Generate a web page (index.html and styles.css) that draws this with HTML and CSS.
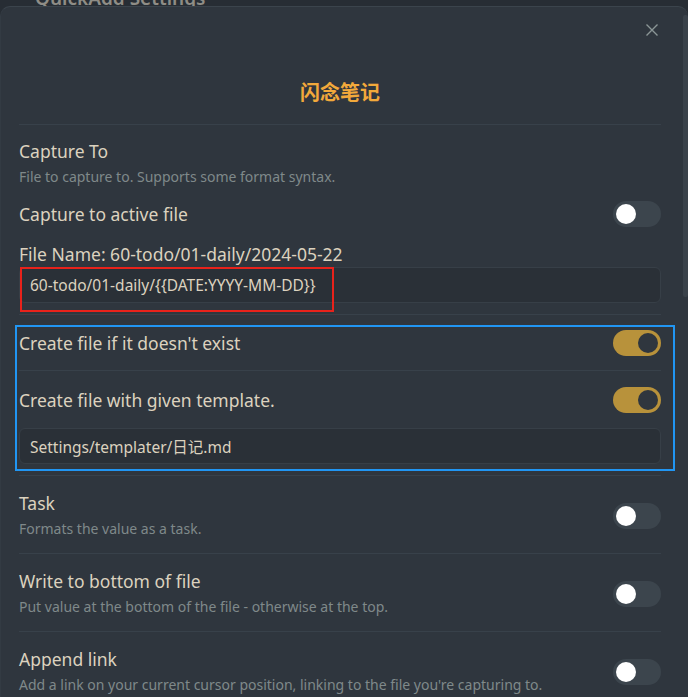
FILE: index.html
```html
<!DOCTYPE html>
<html>
<head>
<meta charset="utf-8">
<link rel="stylesheet" href="styles.css">
</head>
<body>
<div class="page-title">QuickAdd Settings</div>
<div class="modal">
  <div class="scroll-thumb"></div>
  <div class="close-row">
    <svg class="close" width="14" height="14" viewBox="0 0 14 14"><path d="M1.5 1.5L12.5 12.5M12.5 1.5L1.5 12.5" stroke="#8b9696" stroke-width="1.4" fill="none"/></svg>
  </div>
  <h2 class="title">闪念笔记</h2>
  <div class="content">
    <div class="block first">
      <div class="name">Capture To</div>
      <div class="desc">File to capture to. Supports some format syntax.</div>
      <div class="row">
        <div class="name">Capture to active file</div>
        <div class="toggle"></div>
      </div>
      <div class="name fname">File Name: 60-todo/01-daily/2024-05-22</div>
      <div class="input">60-todo/01-daily/{{DATE:YYYY-MM-DD}}</div>
    </div>
    <div class="item short">
      <div class="info"><div class="name">Create file if it doesn't exist</div></div>
      <div class="toggle on"></div>
    </div>
    <div class="item tmpl">
      <div class="row">
        <div class="name">Create file with given template.</div>
        <div class="toggle on"></div>
      </div>
      <div class="input">Settings/templater/日记.md</div>
    </div>
    <div class="item">
      <div class="info">
        <div class="name">Task</div>
        <div class="desc">Formats the value as a task.</div>
      </div>
      <div class="toggle"></div>
    </div>
    <div class="item">
      <div class="info">
        <div class="name">Write to bottom of file</div>
        <div class="desc">Put value at the bottom of the file - otherwise at the top.</div>
      </div>
      <div class="toggle"></div>
    </div>
    <div class="item">
      <div class="info">
        <div class="name">Append link</div>
        <div class="desc">Add a link on your current cursor position, linking to the file you're capturing to.</div>
      </div>
      <div class="toggle"></div>
    </div>
  </div>
  <div class="mark red"></div>
  <div class="mark blue"></div>
</div>
</body>
</html>
```
FILE: styles.css
```css
html, body {
  margin: 0;
  padding: 0;
  height: 100%;
  overflow: hidden;
  background: #272d34;
  font-family: "Noto Sans", "Noto Sans CJK SC", sans-serif;
}
.page-title {
  margin: -14px 0 0 35px;
  font-size: 19px;
  font-weight: 600;
  color: #8f8d86;
  line-height: 24px;
}
.modal {
  position: absolute;
  left: 0;
  top: 6px;
  width: 688px;
  height: 720px;
  box-sizing: border-box;
  background: #2f363e;
  border-top: 1px solid #3b444c;
  border-left: 1px solid #333b43;
  border-radius: 10px;
  padding: 0 27px 0 18px;
}
.scroll-thumb {
  position: absolute;
  right: 0;
  top: 8px;
  width: 5px;
  height: 282px;
  background: #3a424a;
  border-radius: 2px;
}
.close-row {
  display: flex;
  justify-content: flex-end;
  height: 30px;
  align-items: flex-end;
  margin-right: 2px;
}
.close { display: block; }
.title {
  margin: 0;
  text-align: center;
  color: #f2a93b;
  font-size: 20px;
  font-weight: 600;
  line-height: 28px;
  padding: 42px 0 17px;
  border-bottom: 1px solid #38414a;
}
.name {
  color: #dcd2bf;
  font-size: 17.5px;
  line-height: 24px;
}
.desc {
  color: #7f898a;
  font-size: 14px;
  line-height: 22px;
  margin-top: 3px;
}
.row {
  display: flex;
  align-items: center;
  justify-content: space-between;
}
.block.first {
  padding: 14px 0 11px;
  border-bottom: 1px solid #38414a;
}
.block.first .row { margin-top: 13px; }
.fname { margin-top: 15px; }
.input {
  margin-top: 1px;
  height: 36px;
  box-sizing: border-box;
  background: #2a3037;
  border: 1px solid #373f47;
  border-radius: 6px;
  padding: 0 10px;
  display: flex;
  align-items: center;
  color: #dcd2bf;
  font-size: 15.5px;
}
.item {
  display: flex;
  align-items: center;
  justify-content: space-between;
  padding: 15px 0 13px;
  border-bottom: 1px solid #38414a;
}
.item.short { padding: 15px 0 14px; }
.item.tmpl {
  display: block;
  padding: 16px 0 11px;
}
.item.tmpl .input { margin-top: 15px; }
.toggle {
  width: 48px;
  height: 26px;
  border-radius: 13px;
  background: #3c454d;
  position: relative;
  flex: none;
}
.toggle::after {
  content: "";
  position: absolute;
  left: 3px;
  top: 3px;
  width: 20px;
  height: 20px;
  border-radius: 50%;
  background: #ffffff;
}
.toggle.on { background: #b8923b; }
.toggle.on::after {
  left: auto;
  right: 3px;
  background: #2f363e;
}
.mark {
  position: absolute;
  box-sizing: border-box;
}
.mark.red {
  left: 19px;
  top: 260px;
  width: 314px;
  height: 45px;
  border: 2px solid #e8221b;
}
.mark.blue {
  left: 14px;
  top: 318px;
  width: 660px;
  height: 146px;
  border: 2px solid #2196f3;
}
```
